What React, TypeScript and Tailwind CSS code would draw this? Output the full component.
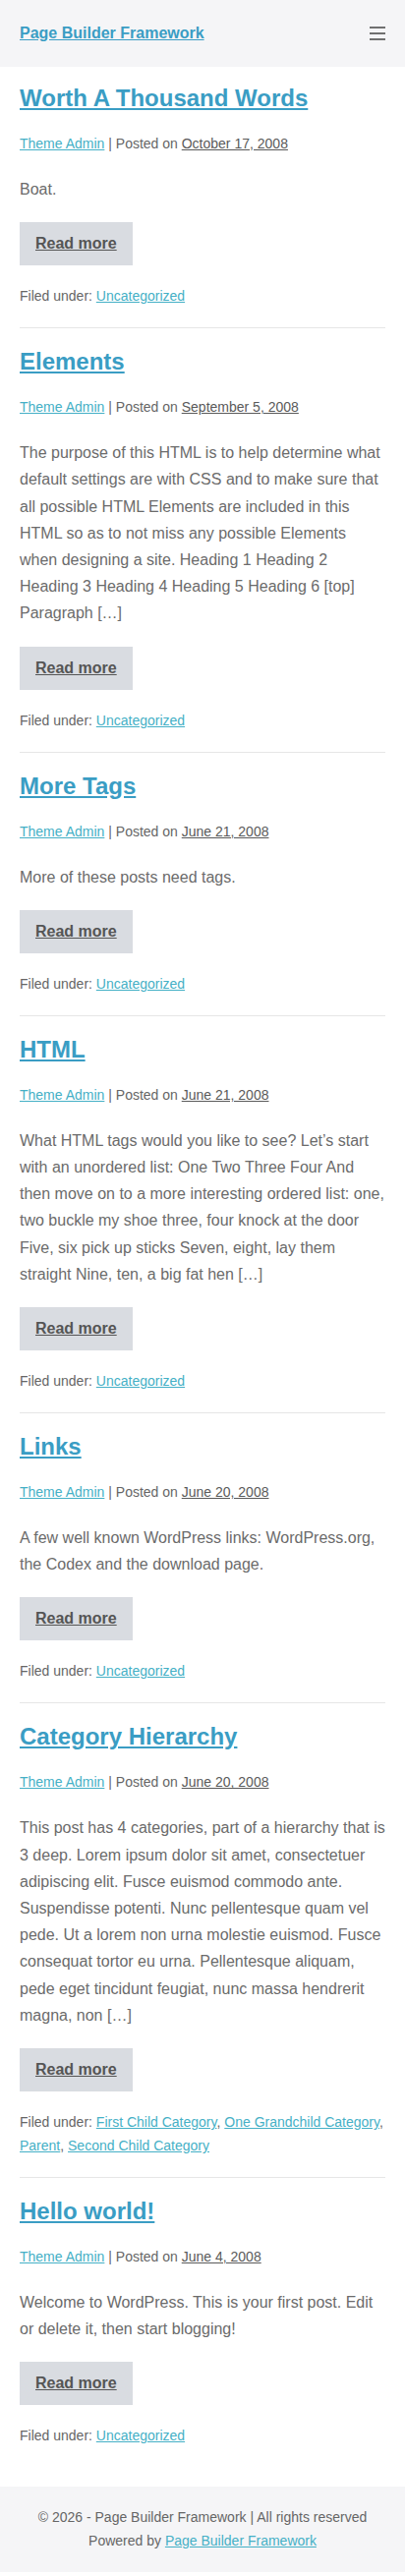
import React from "react";

type Post = {
  title: string;
  date: string;
  body: string;
  cats: string[];
};

const posts: Post[] = [
  { title: "Worth A Thousand Words", date: "October 17, 2008", body: "Boat.", cats: ["Uncategorized"] },
  {
    title: "Elements",
    date: "September 5, 2008",
    body: "The purpose of this HTML is to help determine what default settings are with CSS and to make sure that all possible HTML Elements are included in this HTML so as to not miss any possible Elements when designing a site. Heading 1 Heading 2 Heading 3 Heading 4 Heading 5 Heading 6 [top] Paragraph […]",
    cats: ["Uncategorized"],
  },
  { title: "More Tags", date: "June 21, 2008", body: "More of these posts need tags.", cats: ["Uncategorized"] },
  {
    title: "HTML",
    date: "June 21, 2008",
    body: "What HTML tags would you like to see? Let’s start with an unordered list: One Two Three Four And then move on to a more interesting ordered list: one, two buckle my shoe three, four knock at the door Five, six pick up sticks Seven, eight, lay them straight Nine, ten, a big fat hen […]",
    cats: ["Uncategorized"],
  },
  {
    title: "Links",
    date: "June 20, 2008",
    body: "A few well known WordPress links: WordPress.org, the Codex and the download page.",
    cats: ["Uncategorized"],
  },
  {
    title: "Category Hierarchy",
    date: "June 20, 2008",
    body: "This post has 4 categories, part of a hierarchy that is 3 deep. Lorem ipsum dolor sit amet, consectetuer adipiscing elit. Fusce euismod commodo ante. Suspendisse potenti. Nunc pellentesque quam vel pede. Ut a lorem non urna molestie euismod. Fusce consequat tortor eu urna. Pellentesque aliquam, pede eget tincidunt feugiat, nunc massa hendrerit magna, non […]",
    cats: ["First Child Category", "One Grandchild Category", "Parent", "Second Child Category"],
  },
  {
    title: "Hello world!",
    date: "June 4, 2008",
    body: "Welcome to WordPress. This is your first post. Edit or delete it, then start blogging!",
    cats: ["Uncategorized"],
  },
];

export default function App() {
  return (
    <div className="w-full bg-white text-[#6b6b6b]" style={{ fontFamily: '"Liberation Sans", Arial, sans-serif' }}>
      <header className="h-[68px] bg-[#f5f5f7] px-5 flex items-center justify-between">
        <a href="#" className="text-[16px] font-bold text-[#3a9dc4] underline leading-6">
          Page Builder Framework
        </a>
        <button className="flex flex-col gap-[4px] w-4" aria-label="menu">
          <span className="block h-[2px] w-4 bg-[#707070]" />
          <span className="block h-[2px] w-4 bg-[#707070]" />
          <span className="block h-[2px] w-4 bg-[#707070]" />
        </button>
      </header>
      <main className="px-5 pb-10">
        {posts.map((p, i) => {
          const last = i === posts.length - 1;
          return (
            <article
              key={p.title}
              className={
                (i === 0 ? "pt-4 " : "pt-[18px] ") +
                (last ? "" : "pb-5 border-b border-[#e6e6e6]")
              }
            >
              <h2 className="text-[24px] leading-[31px] font-bold">
                <a href="#" className="text-[#3a9dc4] underline">
                  {p.title}
                </a>
              </h2>
              <div className="mt-[19px] text-[14px] leading-6 text-[#666]">
                <a href="#" className="text-[#45b0c6] underline">Theme Admin</a> | Posted on{" "}
                <a href="#" className="text-[#5a5a5a] underline">{p.date}</a>
              </div>
              <p className="mt-[21px] text-[16px] leading-[27.2px] text-[#6b6b6b]">{p.body}</p>
              <div className="mt-5">
                <a
                  href="#"
                  className="inline-block bg-[#d9dce1] px-4 py-[10px] text-[16px] leading-6 font-bold text-[#555] underline"
                >
                  Read more
                </a>
              </div>
              <div className="mt-[19px] text-[14px] leading-6 text-[#666]">
                Filed under:{" "}
                {p.cats.map((c, j) => (
                  <React.Fragment key={c}>
                    <a href="#" className="text-[#45b0c6] underline">{c}</a>
                    {j < p.cats.length - 1 ? ", " : ""}
                  </React.Fragment>
                ))}
              </div>
            </article>
          );
        })}
      </main>
      <footer className="bg-[#f5f5f7] pt-[19px] pb-5 text-center text-[14px] leading-6 text-[#666]">
        <div>© 2026 - Page Builder Framework | All rights reserved</div>
        <div>
          Powered by <a href="#" className="text-[#45b0c6] underline">Page Builder Framework</a>
        </div>
      </footer>
    </div>
  );
}
